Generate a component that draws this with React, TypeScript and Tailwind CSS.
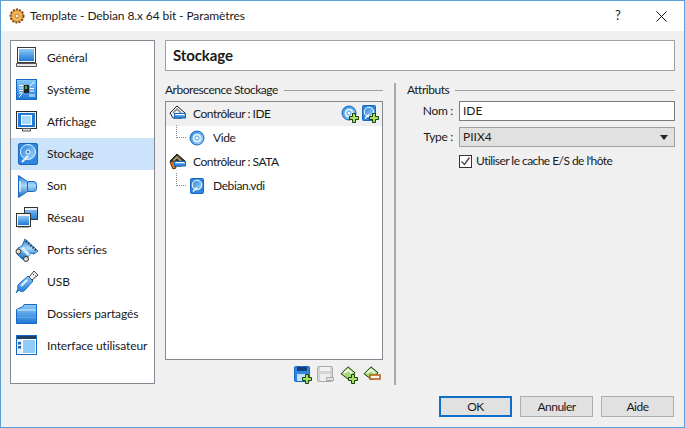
import type { ReactNode } from 'react'

function Icon({ size = 24, children }: { size?: number; children: ReactNode }) {
  return (
    <svg width={size} height={size} viewBox={`0 0 ${size} ${size}`} className="shrink-0 block">
      {children}
    </svg>
  )
}

// gradients shared by every icon below
const IconDefs = () => (
  <svg width="0" height="0" className="absolute">
    <defs>
      <linearGradient id="blueV" x1="0" y1="0" x2="0" y2="1">
        <stop offset="0" stopColor="#8ccaf8" />
        <stop offset="1" stopColor="#1f78d6" />
      </linearGradient>
      <linearGradient id="blueH" x1="0" y1="0" x2="1" y2="1">
        <stop offset="0" stopColor="#2a82dc" />
        <stop offset="1" stopColor="#a8d8fb" />
      </linearGradient>
      <linearGradient id="cone" x1="0" y1="0" x2="0" y2="1">
        <stop offset="0" stopColor="#1f78d6" />
        <stop offset=".45" stopColor="#a8d8fb" />
        <stop offset="1" stopColor="#1668c0" />
      </linearGradient>
    </defs>
  </svg>
)

// sidebar icons, all on a 24px grid
const GeneralIcon = () => (
  <Icon>
    <rect x="2.500" y="1.500" width="18" height="15" fill="#fff" stroke="#3a3a3a" />
    <rect x="4" y="3" width="15" height="12" fill="url(#blueV)" />
    <path d="M1.500 17.500h20v3h-20z" fill="#e8e8e8" stroke="#555" />
  </Icon>
)
const SystemIcon = () => (
  <Icon>
    <rect x="1.500" y="1.500" width="20" height="20" fill="url(#blueV)" stroke="#1668c0" />
    <rect x="9" y="7" width="5" height="8" fill="#222" />
    <rect x="10" y="8" width="2" height="3" fill="#3fb34a" />
    <path d="M4 7.500h4M4 10h4M4 12.500h4M4 15h4M15 8l4-4M15 10.500h4M15 13h4M15 19v-3M17 19v-3M19 19v-3M4 19l3-3" stroke="#fff" />
  </Icon>
)
const DisplayIcon = () => (
  <Icon>
    <rect x="1.500" y="1.500" width="20" height="17" fill="#f4f4f4" stroke="#2a2a2a" />
    <rect x="3" y="3" width="17" height="14" fill="#1f78d6" />
    <rect x="6.500" y="5.500" width="10" height="9" fill="#a8d8fb" stroke="#fff" />
    <path d="M7.500 18.500h8v2.500h-8z" fill="#ddd" stroke="#555" />
  </Icon>
)
const DiskIcon = () => (
  <Icon>
    <rect x="3.500" y="1.500" width="19" height="21" rx="1.500" fill="#2f86dc" stroke="#1668c0" />
    <circle cx="13" cy="10" r="7.500" fill="url(#blueH)" stroke="#d7eeff" />
    <circle cx="13" cy="10" r="2" fill="#2f7fd0" stroke="#fff" />
    <path d="M7 20l6-6" stroke="#e8f4ff" strokeWidth="2" />
  </Icon>
)
const SoundIcon = () => (
  <Icon>
    <path d="M3.500 1.500l9 6h6a3 3 0 0 1 3 3v4a3 3 0 0 1-3 3h-6l-9 6z" fill="url(#cone)" stroke="#1668c0" />
    <path d="M12.500 8v9" stroke="#1668c0" />
    <path d="M5 7v11" stroke="#d7eeff" strokeWidth="1.500" />
  </Icon>
)
const NetworkIcon = () => (
  <Icon>
    <rect x="9.500" y="1.500" width="13" height="12" fill="url(#blueV)" stroke="#333" />
    <rect x="10" y="2" width="12" height="2" fill="#eee" />
    <rect x="1.500" y="7.500" width="14" height="13" fill="#f2f2f2" stroke="#333" />
    <rect x="3" y="10" width="11" height="9" fill="url(#blueV)" />
    <path d="M3 21.500h11" stroke="#aaa" />
  </Icon>
)
const SerialIcon = () => (
  <Icon>
    <path d="M10 1l13 12-4 3-3-1-5 6H7L2 16l1-6 4-2z" fill="url(#cone)" stroke="#1668c0" />
    <path d="M11 3l10 9.500" stroke="#333" strokeWidth="2" strokeDasharray="1.500 1.500" />
    <path d="M7 10l7 7" stroke="#d7eeff" strokeWidth="3" />
    <circle cx="3.500" cy="13.500" r="2.500" fill="#ddd" stroke="#333" />
    <circle cx="11" cy="21" r="2.500" fill="#ddd" stroke="#333" />
  </Icon>
)
const UsbIcon = () => (
  <Icon>
    <path d="M13 6l5 5-8 9c-2 2-5 2-6 0l-3 3 2-4c-1-2 0-5 2-6z" fill="url(#blueV)" stroke="#1668c0" />
    <path d="M6 16l6-6" stroke="#e8f4ff" strokeWidth="2" />
    <path d="M14 7l5-6 4 4-6 5z" fill="#f2f2f2" stroke="#444" />
    <path d="M18 4.500h1M20 6h1" stroke="#444" />
  </Icon>
)
const FolderIcon = () => (
  <Icon>
    <path d="M1.500 7.500L8 4.500l1-2h12.500v19h-20z" fill="url(#blueV)" stroke="#1668c0" />
    <path d="M2 8h19" stroke="#d7eeff" />
    <path d="M2 15.500h19" stroke="#5ba6ea" />
  </Icon>
)
const InterfaceIcon = () => (
  <Icon>
    <rect x="1.500" y="1.500" width="20" height="19" fill="#fff" stroke="#1668c0" />
    <rect x="2" y="2" width="19" height="3" fill="#1d3f66" />
    <rect x="2" y="5" width="5" height="15" fill="#e4f1fc" />
    <rect x="8" y="6" width="12" height="13" fill="#8fcdf8" />
    <rect x="3" y="8" width="3" height="2.500" fill="#1668c0" />
    <rect x="3" y="12" width="3" height="2.500" fill="#1668c0" />
  </Icon>
)

// small green plus used on the tree and toolbar buttons
const Plus = ({ x = 8.500, y = 8.500 }: { x?: number; y?: number }) => (
  <path
    transform={`translate(${x} ${y})`}
    d="M3 0h3v3h3v3H6v3H3V6H0V3h3z"
    fill="#a8e060"
    stroke="#1c3d12"
  />
)

const ControllerIcon = ({ sata }: { sata?: boolean }) => (
  <Icon size={18}>
    <path d="M8 1l8 7-3 5H4L1 8z" fill={sata ? '#3c3a2c' : '#f2f2f2'} stroke="#222" />
    <path d="M4 8l4-4 4 4" fill="none" stroke={sata ? '#b8a878' : '#888'} strokeWidth="1.500" />
    {sata && <path d="M1 9l4-1 2 7-3 1z" fill="#d8791c" stroke="#5a3008" />}
    <rect x="5.500" y="8.500" width="11" height="4.500" fill="url(#blueV)" stroke="#1668c0" />
    <path d="M6.500 9.500h9" stroke="#fff" />
  </Icon>
)
const Disc = () => (
  <>
    <circle cx="8" cy="8" r="7" fill="url(#blueH)" stroke="#1668c0" />
    <circle cx="8" cy="8" r="4.500" fill="#d7eeff" />
    <circle cx="8" cy="8" r="2" fill="#fff" stroke="#4a9ce6" />
  </>
)
const SmallDiskIcon = () => (
  <>
    <rect x="1.500" y=".500" width="13" height="15" rx="1" fill="#2f86dc" stroke="#1668c0" />
    <circle cx="8" cy="7" r="4.800" fill="url(#blueH)" stroke="#fff" />
    <path d="M4 13.500l4-4" stroke="#fff" strokeWidth="1.500" />
  </>
)
const CdIcon = () => <Icon size={16}><Disc /></Icon>
const HddIcon = () => <Icon size={16}><SmallDiskIcon /></Icon>
const AddCdIcon = () => <Icon size={18}><Disc /><Plus /></Icon>
const AddDiskIcon = () => <Icon size={18}><SmallDiskIcon /><Plus /></Icon>

const FloppyIcon = ({ off }: { off?: boolean }) => (
  <Icon size={18}>
    <rect x=".500" y=".500" width="15" height="15" rx="1" fill={off ? '#d4d4d4' : '#2f86dc'} stroke={off ? '#aaa' : '#1668c0'} />
    <rect x="3" y="1" width="10" height="4" fill={off ? '#f2f2f2' : '#0f3f80'} />
    <rect x="3" y="8" width="10" height="7" fill={off ? '#eee' : '#bfe0fb'} />
    {off ? <path d="M9.500 11.500h7v3h-7z" fill="#e4e4e4" stroke="#aaa" /> : <Plus />}
  </Icon>
)
const AttachIcon = ({ remove }: { remove?: boolean }) => (
  <Icon size={18}>
    <path d="M8 .800l7 6-6 7-8-6z" fill="#a8d87c" stroke="#1c3d12" />
    <path d="M4 7l4-3 4 3" fill="none" stroke="#f4f9ec" strokeWidth="2" />
    {remove ? (
      <path d="M7 9h10v4H7z" fill="#f7f7f7" stroke="#b85c10" strokeWidth="1.500" />
    ) : (
      <Plus />
    )}
  </Icon>
)

const pages = [
  { label: 'Général', icon: <GeneralIcon /> },
  { label: 'Système', icon: <SystemIcon /> },
  { label: 'Affichage', icon: <DisplayIcon /> },
  { label: 'Stockage', icon: <DiskIcon />, active: true },
  { label: 'Son', icon: <SoundIcon /> },
  { label: 'Réseau', icon: <NetworkIcon /> },
  { label: 'Ports séries', icon: <SerialIcon /> },
  { label: 'USB', icon: <UsbIcon /> },
  { label: 'Dossiers partagés', icon: <FolderIcon /> },
  { label: 'Interface utilisateur', icon: <InterfaceIcon /> },
]

function GroupTitle({ title }: { title: string }) {
  return (
    <div className="flex items-center gap-[6px] h-[18px]">
      <span className="leading-none whitespace-nowrap tracking-[-0.48px]">{title}</span>
      <div className="flex-1 h-px bg-[#a0a0a0]" />
    </div>
  )
}

function TreeChild({ icon, label }: { icon: ReactNode; label: string }) {
  return (
    <div className="flex items-center h-6 pl-[10px]">
      <div className="w-[10px] h-[13px] -mt-[13px] border-l border-b border-dotted border-[#888]" />
      <div className="ml-[3px] mr-[8px]">{icon}</div>
      <span className="tracking-[-0.4px]">{label}</span>
    </div>
  )
}

function DialogButton({ label, focused }: { label: string; focused?: boolean }) {
  return (
    <div className={`w-[73px] h-[21px] bg-[#e1e1e1] flex items-center justify-center tracking-[-0.5px] ${focused ? 'border-2 border-[#0f6fc6]' : 'border border-[#adadad]'}`}>
      {label}
    </div>
  )
}

export default function App() {
  return (
    <div className="w-[685px] h-[428px] flex flex-col border border-[#5b9fd4] bg-[#f0f0f0] text-[12px] text-[#1a1a1a] font-['Lato','Noto_Sans',sans-serif] overflow-hidden">
      <IconDefs />
      <div className="h-[30px] shrink-0 bg-white flex items-center pl-[8px]">
        <svg width="16" height="16" viewBox="0 0 16 16" className="shrink-0">
          <circle cx="8" cy="8" r="6.500" fill="#e8a33c" stroke="#7a4a1a" strokeWidth="2" strokeDasharray="2 1.200" />
          <circle cx="8" cy="8" r="4.500" fill="#f0b860" />
          <circle cx="8" cy="8" r="2" fill="#fff3d8" stroke="#b8732a" />
        </svg>
        <span className="ml-[5px] flex-1 whitespace-nowrap tracking-[-0.1px]">Template - Debian 8.x 64 bit - Paramètres</span>
        <span className="w-[14px] text-center text-[13px] mr-[31px]">?</span>
        <svg width="11" height="11" viewBox="0 0 11 11" className="mr-[17px]">
          <path d="M.500.500l10 10M10.500.500l-10 10" stroke="#111" />
        </svg>
      </div>

      <div className="flex flex-1 min-h-0 pt-[9px] pl-[9px] pr-[9px]">
        {/* page list */}
        <div className="w-[145px] h-[344px] shrink-0 border border-[#828790] bg-white pt-[1px] mr-[10px]">
          {pages.map(p => (
            <div key={p.label} className={`h-[32px] flex items-center pl-[4px] ${p.active ? 'bg-[#cce4fb]' : ''}`}>
              {p.icon}
              <span className="ml-[8px] whitespace-nowrap tracking-[-0.1px]">{p.label}</span>
            </div>
          ))}
        </div>

        <div className="flex-1 min-w-0">
          <div className="h-[31px] border border-[#a0a0a0] bg-white flex items-center pl-[7px] text-[15px] font-bold tracking-[-0.1px]">Stockage</div>

          <div className="flex mt-[9px] h-[305px]">
            {/* storage tree */}
            <div className="w-[218px] shrink-0 pt-[1px]">
              <GroupTitle title="Arborescence Stockage" />
              <div className="h-[259px] mt-[2px] border border-[#828790] bg-white">
                <div className="h-6 flex items-center pl-[3px] bg-[#f0f0f0] pr-[3px]">
                  <ControllerIcon />
                  <span className="ml-[6px] flex-1 tracking-[-0.47px]">Contrôleur : IDE</span>
                  <AddCdIcon />
                  <div className="ml-[2px]"><AddDiskIcon /></div>
                </div>
                <TreeChild icon={<CdIcon />} label="Vide" />
                <div className="h-6 flex items-center pl-[3px]">
                  <ControllerIcon sata />
                  <span className="ml-[6px] tracking-[-0.47px]">Contrôleur : SATA</span>
                </div>
                <TreeChild icon={<HddIcon />} label="Debian.vdi" />
              </div>
              <div className="flex justify-end gap-[5px] mt-[6px] pr-[2px]">
                <FloppyIcon />
                <FloppyIcon off />
                <AttachIcon />
                <AttachIcon remove />
              </div>
            </div>

            <div className="w-[2px] h-[302px] mt-[3px] shrink-0 bg-[#a9a9a9] ml-[11px] mr-[11px]" />

            {/* attributes of the selected controller */}
            <div className="flex-1 min-w-0 pt-[1px]">
              <GroupTitle title="Attributs" />
              <div className="flex items-center h-[20px] mt-[2px]">
                <span className="w-[46px] text-right tracking-[-0.3px]">Nom :</span>
                <div className="ml-[6px] flex-1 h-[20px] border border-[#7a7a7a] bg-white flex items-center pl-[3px]">IDE</div>
              </div>
              <div className="flex items-center h-[20px] mt-[6px]">
                <span className="w-[46px] text-right tracking-[-0.3px]">Type :</span>
                <div className="ml-[6px] flex-1 h-[20px] border border-[#a0a0a0] bg-[#e1e1e1] flex items-center pl-[3px] pr-[6px] justify-between">
                  <span>PIIX4</span>
                  <svg width="8" height="5" viewBox="0 0 8 5"><path d="M0 0h8L4 5z" fill="#222" /></svg>
                </div>
              </div>
              <div className="flex items-center h-[20px] mt-[4px] pl-[52px]">
                <div className="w-[13px] h-[13px] border border-[#333] bg-white flex items-center justify-center">
                  <svg width="11" height="11" viewBox="0 0 11 11"><path d="M1.500 5.500l3 3 5-7" fill="none" stroke="#444" strokeWidth="1.300" /></svg>
                </div>
                <span className="ml-[4px] whitespace-nowrap tracking-[-0.55px]">Utiliser le cache E/S de l'hôte</span>
              </div>
            </div>
          </div>
        </div>
      </div>

      <div className="flex justify-end gap-[8px] pr-[10px] pb-[10px]">
        <DialogButton label="OK" focused />
        <DialogButton label="Annuler" />
        <DialogButton label="Aide" />
      </div>
    </div>
  )
}
